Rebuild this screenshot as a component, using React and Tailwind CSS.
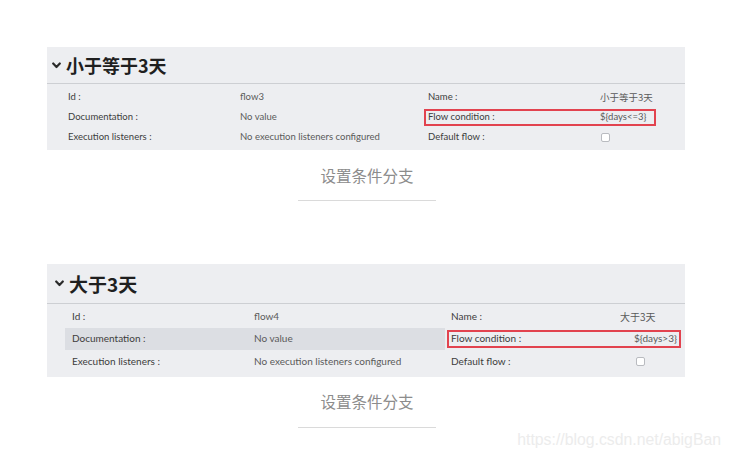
import React from 'react';

const Chevron = () => (
    <svg width="9" height="7" viewBox="0 0 9 7" className="shrink-0">
        <polyline points="1.2,1.5 4.5,5 7.8,1.5" fill="none" stroke="#2a2a2a" strokeWidth="2.2" strokeLinecap="round" strokeLinejoin="round" />
    </svg>
);

const Checkbox = () => (
    <span className="inline-block w-[9px] h-[9px] rounded-[2px] border border-[#b9bbc0] bg-white" />
);

const Caption = ({ className }) => (
    <div className={`flex flex-col items-center pl-[4px] ${className}`}>
        <div className="text-[15.5px] leading-[20px] text-[#8c8c8c]" style={{ fontFamily: '"Noto Sans CJK SC", sans-serif' }}>设置条件分支</div>
    </div>
);

export default function App() {
    const lato = { fontFamily: 'Lato, "Noto Sans CJK SC", sans-serif' };
    const cjk = { fontFamily: '"Noto Sans CJK SC", sans-serif' };

    return (
        <div className="w-[730px] h-[461px] bg-white overflow-hidden" style={lato}>
            {/* 小于等于3天 */}
            <div className="ml-[47px] mt-[47px] w-[638px] bg-[#edeef1]">
                <div className="h-[37px] flex items-center gap-[5px] pl-[5px] border-b border-[#cdcfd3]">
                    <Chevron />
                    <span className="text-[18px] font-bold text-[#1f1f1f] leading-none" style={cjk}>小于等于3天</span>
                </div>
                <div className="py-[3px] text-[9.5px] text-[#3c3c3c]">
                    <div className="flex h-5 items-center pl-[21px]">
                        <div className="w-[172px]">Id :</div>
                        <div className="w-[184px] text-[#5a5a5a]">flow3</div>
                        <div className="flex items-center h-[17px] w-[232px] border-2 border-transparent pl-[2px]">
                            <span className="w-[172px] shrink-0">Name :</span>
                            <span className="text-[#5a5a5a]" style={cjk}>小于等于3天</span>
                        </div>
                    </div>
                    <div className="flex h-5 items-center pl-[21px]">
                        <div className="w-[172px]">Documentation :</div>
                        <div className="w-[184px] text-[#5a5a5a]">No value</div>
                        <div className="flex items-center h-[17px] w-[232px] border-2 border-[#e2434f] pl-[2px]">
                            <span className="w-[172px] shrink-0">Flow condition :</span>
                            <span className="text-[#5a5a5a]">{'${days<=3}'}</span>
                        </div>
                    </div>
                    <div className="flex h-5 items-center pl-[21px]">
                        <div className="w-[172px]">Execution listeners :</div>
                        <div className="w-[184px] text-[#5a5a5a]">No execution listeners configured</div>
                        <div className="flex items-center h-[17px] w-[232px] border-2 border-transparent pl-[2px]">
                            <span className="w-[172px] shrink-0">Default flow :</span>
                            <span className="ml-px flex items-center"><Checkbox /></span>
                        </div>
                    </div>
                </div>
            </div>

            <Caption className="mt-[15px]" />
            <div className="ml-[298px] mt-[15px] h-px w-[138px] bg-[#dadada]" />

            {/* 大于3天 */}
            <div className="ml-[47px] mt-[63px] w-[638px] bg-[#edeef1]">
                <div className="h-[40px] flex items-center gap-[5px] pl-[8px] border-b border-[#cdcfd3]">
                    <Chevron />
                    <span className="text-[19px] font-bold text-[#1f1f1f] leading-none" style={cjk}>大于3天</span>
                </div>
                <div className="pt-px pb-[5px] text-[10px] text-[#3c3c3c]">
                    <div className="flex h-[22px] items-center pl-[18px]">
                        <div className="flex items-center h-full w-[380px] pl-[7px]">
                            <div className="w-[182px]">Id :</div>
                            <div className="text-[#5a5a5a]">flow4</div>
                        </div>
                        <div className="ml-[2px] flex items-center h-[18px] w-[234px] border-2 border-transparent pl-[2px]">
                            <span className="w-[169px] shrink-0">Name :</span>
                            <span className="text-[#5a5a5a]" style={cjk}>大于3天</span>
                        </div>
                    </div>
                    <div className="flex h-[23px] items-center pl-[18px]">
                        <div className="flex items-center h-[22px] w-[380px] pl-[7px] bg-[#dcdee3]">
                            <div className="w-[182px]">Documentation :</div>
                            <div className="text-[#5a5a5a]">No value</div>
                        </div>
                        <div className="ml-[2px] flex items-center h-[18px] w-[234px] border-2 border-[#e2434f] pl-[2px]">
                            <span className="w-[169px] shrink-0">Flow condition :</span>
                            <span className="ml-[14px] text-[#5a5a5a]">{'${days>3}'}</span>
                        </div>
                    </div>
                    <div className="flex h-[22px] items-center pl-[18px]">
                        <div className="flex items-center h-full w-[380px] pl-[7px]">
                            <div className="w-[182px]">Execution listeners :</div>
                            <div className="text-[#5a5a5a]">No execution listeners configured</div>
                        </div>
                        <div className="ml-[2px] flex items-center h-[18px] w-[234px] border-2 border-transparent pl-[2px]">
                            <span className="w-[169px] shrink-0">Default flow :</span>
                            <span className="ml-[16px] flex items-center"><Checkbox /></span>
                        </div>
                    </div>
                </div>
            </div>

            <Caption className="mt-[14px]" />
            <div className="ml-[298px] mt-[16px] h-px w-[138px] bg-[#dadada]" />

            <div className="mt-[2px] flex justify-end pr-[9px]">
                <span className="text-[15.8px] leading-[19px] text-[#ececec]" style={{ fontFamily: '"Liberation Sans", sans-serif' }}>https://blog.csdn.net/abigBan</span>
            </div>
        </div>
    );
}
